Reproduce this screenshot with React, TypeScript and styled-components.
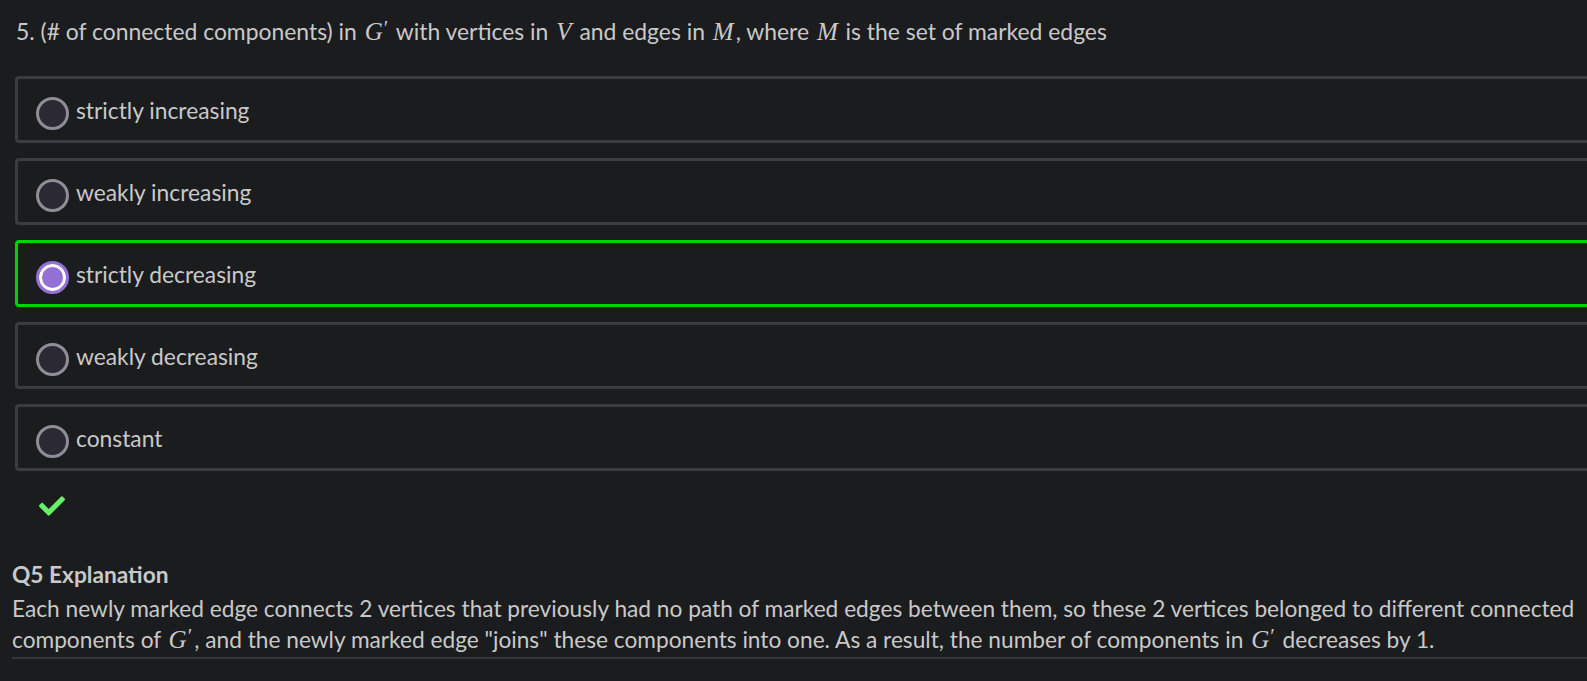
import styled, { createGlobalStyle } from "styled-components";
import { FaCheck } from "react-icons/fa";

const GlobalStyle = createGlobalStyle`
  html, body {
    margin: 0;
    padding: 0;
    background-color: #1b1c1e;
    overflow: hidden;
  }
  body {
    font-family: "Lato", "Open Sans", sans-serif;
    color: #c9c9c9;
  }
`;

const Page = styled.div`
  width: 1640px;
  padding: 16px 0 0 15px;
  box-sizing: border-box;
`;

const Question = styled.div`
  font-size: 22.9px;
  line-height: 30px;
  margin: 0 0 29px 1px;
  white-space: nowrap;
`;

const M = styled.span`
  font-family: "Liberation Serif", "DejaVu Serif", serif;
  font-style: italic;
  font-size: 25px;
  padding: 0 2px;
`;

const Prime = styled.sup`
  font-style: normal;
  font-size: 21px;
  vertical-align: 5px;
  line-height: 0;
  margin-left: 1px;
`;

const Options = styled.div`
  display: flex;
  flex-direction: column;
  gap: 15px;
`;

const Option = styled.label<{ $correct?: boolean }>`
  display: flex;
  align-items: center;
  height: 67px;
  box-sizing: border-box;
  border: 3px solid ${(p) => (p.$correct ? "#00d100" : "#3b3c3e")};
  border-radius: 4px;
  padding: 0 0 0 18px;
  font-size: 22.8px;
  cursor: pointer;
`;

const Radio = styled.span<{ $checked?: boolean }>`
  width: 33px;
  height: 33px;
  box-sizing: border-box;
  border-radius: 50%;
  flex-shrink: 0;
  margin: 7px 7px 0 0;
  border: 3px solid ${(p) => (p.$checked ? "#9470d4" : "#8f8d97")};
  background-color: ${(p) => (p.$checked ? "#9470d4" : "#2b2a33")};
  box-shadow: ${(p) => (p.$checked ? "inset 0 0 0 3px #ffffff" : "none")};
`;

const Check = styled.div`
  color: #66f266;
  font-size: 26px;
  height: 25px;
  margin: 22px 0 0 24px;
`;

const Explanation = styled.div`
  margin: 39px 0 0 -3px;
  padding-bottom: 2px;
  border-bottom: 2px solid #353638;
  font-size: 22.7px;
  line-height: 31px;
  white-space: nowrap;
`;

const ExplTitle = styled.div`
  font-weight: 700;
  line-height: 36px;
`;

const options = [
  "strictly increasing",
  "weakly increasing",
  "strictly decreasing",
  "weakly decreasing",
  "constant",
];

const App = () => {
  return (
    <>
      <GlobalStyle />
      <Page>
        <Question>
          5. (# of connected components) in{" "}
          <M>
            G<Prime>′</Prime>
          </M>{" "}
          with vertices in <M>V</M> and edges in <M>M</M>, where <M>M</M> is the set of marked
          edges
        </Question>

        <Options>
          {options.map((o, i) => (
            <Option key={o} $correct={i === 2}>
              <Radio $checked={i === 2} />
              {o}
            </Option>
          ))}
        </Options>

        <Check>
          <FaCheck />
        </Check>

        <Explanation>
          <ExplTitle>Q5 Explanation</ExplTitle>
          Each newly marked edge connects 2 vertices that previously had no path of marked edges
          between them, so these 2 vertices belonged to different connected
          <br />
          components of{" "}
          <M>
            G<Prime>′</Prime>
          </M>
          , and the newly marked edge "joins" these components into one. As a result, the number of
          components in{" "}
          <M>
            G<Prime>′</Prime>
          </M>{" "}
          decreases by 1.
        </Explanation>
      </Page>
    </>
  );
};

export default App;
